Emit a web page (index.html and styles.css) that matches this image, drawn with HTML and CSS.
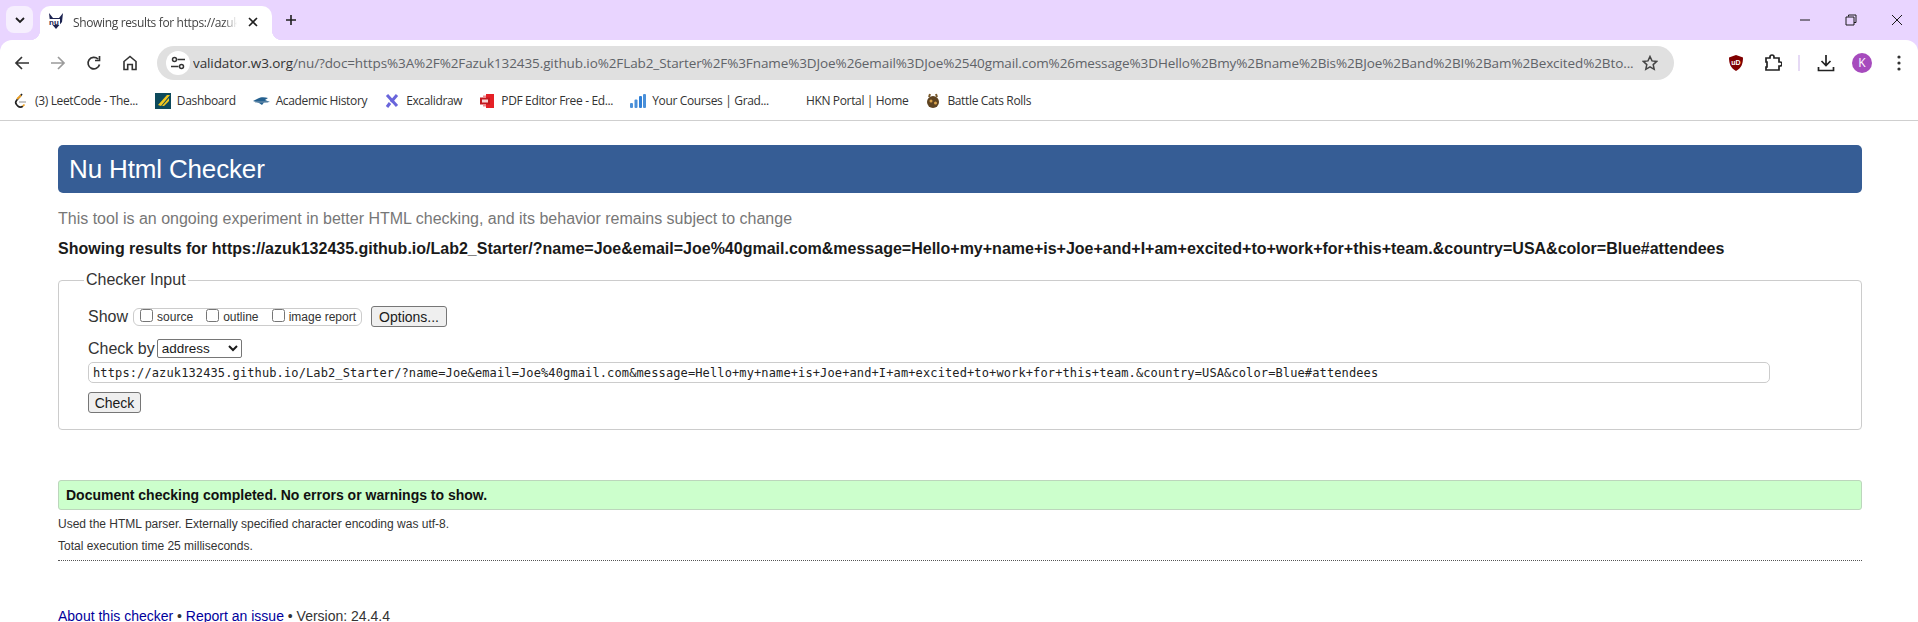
FILE: index.html
```html
<!DOCTYPE html>
<html lang="en">
<head>
    <meta charset="UTF-8" />
    <meta name="viewport" content="width=device-width, initial-scale=1" />
    <title>Showing results for https://azuk132435.github.io/Lab2_Starter/</title>
    <link rel="stylesheet" href="styles.css">
</head>
<body>
    <div class="tabstrip">
        <div class="tab-search">
            <svg width="12" height="12" viewBox="0 0 12 12"><path d="M2 4l4 4 4-4" fill="none" stroke="#1f1f1f" stroke-width="1.8"/></svg>
        </div>
        <div class="tab">
            <svg class="favicon" width="16" height="16" viewBox="0 0 16 16">
                <path d="M1 0l4 5h6l4-5-1 9-6 7-6-7z" fill="#1c2350"/>
                <rect x="0" y="6" width="12" height="6" fill="#fff"/>
                <text x="6" y="11.5" text-anchor="middle" class="nu-text">nu</text>
            </svg>
            <span class="tab-title">Showing results for https://azuk</span>
            <svg class="tab-close" width="10" height="10" viewBox="0 0 10 10"><path d="M1 1l8 8M9 1l-8 8" stroke="#1f1f1f" stroke-width="1.6"/></svg>
        </div>
        <svg class="new-tab" width="12" height="12" viewBox="0 0 12 12"><path d="M6 1v10M1 6h10" stroke="#1f1f1f" stroke-width="1.6"/></svg>
        <div class="window-controls">
            <svg width="12" height="12" viewBox="0 0 12 12"><path d="M1 6h10" stroke="#1a1a1a"/></svg>
            <svg width="12" height="12" viewBox="0 0 12 12"><path d="M3.500 2.500V1H11v7.500H9M1 3h8v8H1z" fill="none" stroke="#1a1a1a"/></svg>
            <svg width="12" height="12" viewBox="0 0 12 12"><path d="M1 1l10 10M11 1L1 11" stroke="#1a1a1a"/></svg>
        </div>
    </div>

    <div class="toolbar">
        <div class="nav-buttons">
            <svg width="16" height="16" viewBox="0 0 16 16"><path d="M15 8H2M8 2L2 8l6 6" fill="none" stroke="#333" stroke-width="1.7"/></svg>
            <svg width="16" height="16" viewBox="0 0 16 16"><path d="M1 8h13M8 2l6 6-6 6" fill="none" stroke="#9b9b9b" stroke-width="1.7"/></svg>
            <svg width="16" height="16" viewBox="0 0 16 16"><path d="M13.500 9.500A5.800 5.800 0 1 1 12 4M13.500 1v4.500H9" fill="none" stroke="#333" stroke-width="1.700"/></svg>
            <svg width="16" height="16" viewBox="0 0 16 16"><path d="M2 14.500V6.500L8 1.500l6 5v8h-3.700V9.500H5.700v5z" fill="none" stroke="#333" stroke-width="1.600"/></svg>
        </div>
        <div class="urlbar">
            <div class="site-chip">
                <svg width="16" height="16" viewBox="0 0 16 16"><path d="M7.500 4.500H15M1 11.500h7.500" stroke="#333" stroke-width="1.500"/><circle cx="4.500" cy="4.500" r="2" fill="none" stroke="#333" stroke-width="1.500"/><circle cx="11.500" cy="11.500" r="2" fill="none" stroke="#333" stroke-width="1.500"/></svg>
            </div>
            <span class="url-text"><span class="url-host">validator.w3.org</span>/nu/?doc=https%3A%2F%2Fazuk132435.github.io%2FLab2_Starter%2F%3Fname%3DJoe%26email%3DJoe%2540gmail.com%26message%3DHello%2Bmy%2Bname%2Bis%2BJoe%2Band%2BI%2Bam%2Bexcited%2Bto...</span>
            <svg class="star" width="16" height="16" viewBox="0 0 16 16"><path d="M8 1.500l2 4.400 4.800.5-3.600 3.200 1 4.700L8 11.900l-4.200 2.400 1-4.700L1.200 6.400 6 5.900z" fill="none" stroke="#444" stroke-width="1.500"/></svg>
        </div>
        <div class="toolbar-right">
            <svg width="16" height="18" viewBox="0 0 16 18"><path d="M8 1l7 2.500c0 6-1.500 10.500-7 13.500C2.500 14 1 9.500 1 3.500z" fill="#800000"/><text x="8" y="11" text-anchor="middle" class="ub-text">uD</text></svg>
            <svg class="puzzle" width="18" height="18" viewBox="0 0 18 18"><path d="M2 4h4V3a2 2 0 0 1 4 0v1h5v4h1a2 2 0 0 1 0 4h-1v4H2v-3h1V8H2z" fill="none" stroke="#222" stroke-width="1.700"/></svg>
            <span class="toolbar-sep"></span>
            <svg class="download" width="18" height="18" viewBox="0 0 18 18"><path d="M9 1v10M4.500 7L9 11.500 13.500 7M1.500 13v3.500h15V13" fill="none" stroke="#222" stroke-width="1.700"/></svg>
            <span class="avatar">K</span>
            <svg class="dots" width="4" height="16" viewBox="0 0 4 16"><circle cx="2" cy="2" r="1.600" fill="#333"/><circle cx="2" cy="8" r="1.600" fill="#333"/><circle cx="2" cy="14" r="1.600" fill="#333"/></svg>
        </div>
    </div>

    <div class="bookmarks">
        <a class="bookmark">
            <svg width="16" height="16" viewBox="0 0 16 16"><path d="M9 1L3.500 7.500c-1 1.200-1 2.800 0 4l1.500 1.700c1.300 1.300 3.500 1.300 4.800 0" fill="none" stroke="#222" stroke-width="1.700"/><path d="M6 9h7" stroke="#b3b3b3" stroke-width="1.500"/><path d="M9.800 13.200l1.700-1.700M4 6l4-3.500" fill="none" stroke="#f0a020" stroke-width="1.700"/></svg>
            (3) LeetCode - The...
        </a>
        <a class="bookmark">
            <svg width="16" height="16" viewBox="0 0 16 16"><rect width="16" height="16" fill="#0d4a5c"/><path d="M3 12L12 2h3L6 13zM7 13l7-8v3l-5 5z" fill="#f2c81e"/></svg>
            Dashboard
        </a>
        <a class="bookmark">
            <svg width="17" height="16" viewBox="0 0 17 16"><path d="M0 8l5-2.500C8 3.500 12 4 15 5l-3 2 5 2-6 .5-2 2.500L6 10z" fill="#24608f"/><path d="M2 9h13" stroke="#7e9bb3"/></svg>
            Academic History
        </a>
        <a class="bookmark">
            <svg width="16" height="16" viewBox="0 0 16 16"><path d="M3 2l10 11M13 2L7 9M3 14l3-4" fill="none" stroke="#6965db" stroke-width="3"/></svg>
            Excalidraw
        </a>
        <a class="bookmark">
            <svg width="16" height="16" viewBox="0 0 16 16"><path d="M7 1h8v14H7z" fill="#e52026"/><rect x="1" y="4.500" width="10" height="7" fill="#c21a1f"/><rect x="3" y="6.500" width="6" height="3" fill="#f7d5d5"/><path d="M4 2.500h3v2H4zM4 11.500h3v2H4z" fill="#f08a8d"/></svg>
            PDF Editor Free - Ed...
        </a>
        <a class="bookmark">
            <svg width="16" height="16" viewBox="0 0 16 16"><rect x="0" y="10" width="3" height="5" rx="1" fill="#4a90d9"/><rect x="4.500" y="6.500" width="3" height="8.500" rx="1" fill="#4a90d9"/><rect x="9" y="3" width="3" height="12" rx="1" fill="#2f7fd6"/><rect x="13" y="1" width="3" height="14" rx="1" fill="#4a90d9"/></svg>
            Your Courses | Grad...
        </a>
        <a class="bookmark">
            <span class="blank-icon"></span>
            HKN Portal | Home
        </a>
        <a class="bookmark">
            <svg width="16" height="16" viewBox="0 0 16 16"><circle cx="8" cy="9" r="6" fill="#5e4321"/><circle cx="6" cy="8" r="1.500" fill="#d8a24a"/><circle cx="10.500" cy="10" r="1.500" fill="#d8a24a"/><path d="M4 4l1-3M12 4l-1-3" stroke="#7a5a2c" stroke-width="2"/></svg>
            Battle Cats Rolls
        </a>
    </div>

    <main class="page">
        <h1 class="page-title">Nu Html Checker</h1>
        <p class="tagline">This tool is an ongoing experiment in better HTML checking, and its behavior remains subject to change</p>
        <p class="results-for">Showing results for https://azuk132435.github.io/Lab2_Starter/?name=Joe&amp;email=Joe%40gmail.com&amp;message=Hello+my+name+is+Joe+and+I+am+excited+to+work+for+this+team.&amp;country=USA&amp;color=Blue#attendees</p>

        <fieldset class="checker-input">
            <legend>Checker Input</legend>
            <div class="show-row">
                <span>Show</span>
                <div class="show-group">
                    <label class="show-option"><input type="checkbox" /> source</label>
                    <label class="show-option"><input type="checkbox" /> outline</label>
                    <label class="show-option"><input type="checkbox" /> image report</label>
                </div>
                <button class="btn btn-options">Options...</button>
            </div>
            <div class="check-by-row">
                <span>Check by</span>
                <select class="check-by"><option>address</option></select>
            </div>
            <input class="doc-url" type="text" value="https://azuk132435.github.io/Lab2_Starter/?name=Joe&amp;email=Joe%40gmail.com&amp;message=Hello+my+name+is+Joe+and+I+am+excited+to+work+for+this+team.&amp;country=USA&amp;color=Blue#attendees" />
            <button class="btn btn-check">Check</button>
        </fieldset>

        <div class="success">Document checking completed. No errors or warnings to show.</div>
        <p class="details">Used the HTML parser. Externally specified character encoding was utf-8.</p>
        <p class="details">Total execution time 25 milliseconds.</p>
        <hr class="dotted" />
        <p class="footer"><a>About this checker</a> • <a>Report an issue</a> • Version: 24.4.4</p>
    </main>
</body>
</html>
```

FILE: styles.css
```css
* { box-sizing: border-box; }
html, body { height: 622px; overflow: hidden; }
body { margin: 0; background: #e9d5ff; font-family: "Liberation Sans", Arial, sans-serif; color: #1a1a1a; }

/* browser chrome */
.tabstrip { display: flex; align-items: flex-end; height: 40px; }
.tab-search { width: 27px; height: 27px; margin: 0 7px 7px 6px; background: #f6effe; border-radius: 8px; display: flex; align-items: center; justify-content: center; }
.tab { position: relative; display: flex; align-items: center; width: 232px; height: 34px; padding: 0 14px 2px 8px; background: #fff; border-radius: 10px 10px 0 0; font: 12px "Open Sans", sans-serif; letter-spacing: -0.35px; color: #444; }
.tab::before, .tab::after { content: ""; position: absolute; bottom: 0; width: 10px; height: 10px; }
.tab::before { left: -10px; background: radial-gradient(circle at 0 0, transparent 10px, #fff 10.5px); }
.tab::after { right: -10px; background: radial-gradient(circle at 100% 0, transparent 10px, #fff 10.5px); }
.favicon { flex: none; margin: 0 9px 2px 0; }
.nu-text { font: bold 8px "Liberation Sans", sans-serif; letter-spacing: 0; fill: #1c2350; }
.tab-title { flex: 1; white-space: nowrap; overflow: hidden; -webkit-mask-image: linear-gradient(to right, #000 92%, transparent); mask-image: linear-gradient(to right, #000 92%, transparent); }
.tab-close { flex: none; margin-left: 11px; }
.new-tab { margin: 0 0 14px 13px; }
.window-controls { margin-left: auto; display: flex; gap: 34px; padding: 0 15px 14px 0; }

.toolbar { display: flex; align-items: center; height: 46px; padding-top: 0; background: #fff; border-radius: 12px 12px 0 0; }
.nav-buttons { display: flex; gap: 20px; padding-left: 14px; width: 157px; }
.urlbar { display: flex; align-items: center; width: 1517px; height: 34px; background: #e0e0e0; border-radius: 17px; padding: 0 16px 0 9px; }
.site-chip { flex: none; width: 24px; height: 24px; margin-right: 3px; background: #fff; border-radius: 50%; display: flex; align-items: center; justify-content: center; }
.url-text { flex: 1; font: 13.5px "Open Sans", sans-serif; letter-spacing: -0.1px; color: #5f6368; white-space: nowrap; overflow: hidden; }
.url-host { color: #333; }
.star { flex: none; }
.toolbar-right { flex: 1; display: flex; align-items: center; padding-left: 54px; }
.puzzle { margin-left: 20px; }
.toolbar-sep { width: 2px; height: 16px; margin-left: 16px; background: #e6daf5; }
.download { margin-left: 17px; }
.avatar { width: 20px; height: 20px; margin-left: 17px; border-radius: 50%; background: #a64bbd; color: #fff; font: 12px/20px "Open Sans", sans-serif; text-align: center; }
.dots { margin-left: 25px; }

.bookmarks { display: flex; align-items: center; gap: 17px; height: 35px; padding: 0 0 5px 13px; background: #fff; border-bottom: 1px solid #cfcfcf; }
.bookmark { display: flex; align-items: center; gap: 6px; font: 12px "Open Sans", sans-serif; letter-spacing: -0.35px; color: #333; white-space: nowrap; }
.blank-icon { width: 14px; height: 16px; }

/* checker page */
.page { height: 501px; padding: 24px 56px 0 58px; background: #fff; }
.page-title { height: 48px; margin: 0; padding-left: 11px; background: #365d95; border-radius: 5px; color: #fff; font-size: 26px; font-weight: normal; letter-spacing: -0.15px; line-height: 48px; }
.tagline { margin: 17px 0 0; font-size: 16px; line-height: 18px; color: #777; }
.results-for { margin: 12px 0 0; font-size: 16px; font-weight: bold; line-height: 18px; color: #1a1a1a; }
.checker-input { margin: 13px 0 0; padding: 0 29px 0; height: 159px; border: 1px solid #ccc; border-radius: 4px; }
.checker-input legend { padding: 0 2px; margin-left: -4px; font-size: 16px; line-height: 18px; color: #333; }
.show-row { display: flex; align-items: center; margin-top: 17px; font-size: 16px; color: #333; }
.show-group { display: flex; width: 229px; height: 18px; margin-left: 5px; padding: 0 5px 0 6px; border: 1px solid #ccc; border-radius: 6px; align-items: center; justify-content: space-between; }
.show-option { display: flex; align-items: center; gap: 4px; font-size: 12px; line-height: 1; }
.show-option input { margin: 0 0 2px; }
.btn { font: 14px "Liberation Sans", Arial, sans-serif; padding: 0; background: #efefef; border: 1px solid #767676; border-radius: 3px; color: #1a1a1a; }
.btn-options { width: 76px; height: 21px; margin-left: 9px; }
.check-by-row { display: flex; align-items: center; gap: 2px; margin-top: 12px; font-size: 16px; color: #333; }
.check-by { width: 85px; height: 19px; font: 13.500px "Liberation Sans", Arial, sans-serif; background: #fff; border: 1px solid #767676; border-radius: 2px; color: #1a1a1a; }
.doc-url { display: block; width: 1682px; height: 21px; margin-top: 4px; padding: 0 4px; border: 1px solid #ccc; border-radius: 5px; font: 12px "DejaVu Sans Mono", monospace; letter-spacing: 0.12px; color: #222; }
.btn-check { display: block; width: 53px; height: 21px; margin-top: 9px; }
.success { height: 30px; margin-top: 50px; padding-left: 7px; background: #ccffcc; border: 1px solid #bcd6bc; border-radius: 3px; font-size: 14px; font-weight: bold; line-height: 28px; color: #111; }
.details { margin: 7px 0 0; font-size: 12px; line-height: 14px; color: #333; }
.details + .details { margin-top: 8px; }
.dotted { margin: 7px 0 0; border: 0; border-top: 1px dotted #555; }
.footer { margin: 47px 0 0; font-size: 14px; line-height: 16px; color: #333; }
.footer a { color: #00009c; }
.ub-text { font: bold 7px "Liberation Sans", sans-serif; fill: #fff; }
```
